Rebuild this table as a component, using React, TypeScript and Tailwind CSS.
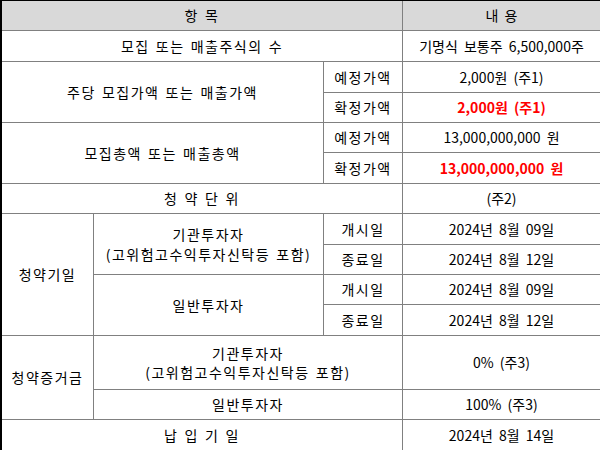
import React from "react";

const C = ({
  children,
  className = "",
  last = false,
}: {
  children?: React.ReactNode;
  className?: string;
  last?: boolean;
}) => (
  <div
    className={
      "flex items-center justify-center text-center border-b border-[#808080] " +
      (last ? "[word-spacing:3px] " : "border-r tracking-[1.5px] [word-spacing:1.5px] ") +
      className
    }
  >
    {children}
  </div>
);

export default function App() {
  return (
    <div
      className="w-[600px] h-[450px] overflow-hidden bg-white border-l-2 border-t border-black text-[14px] text-black"
      style={{ fontFamily: '"Noto Sans CJK KR", "Noto Sans", sans-serif' }}
    >
      <div className="grid grid-cols-[92px_230px_79px_197px] grid-rows-[30px_31px_31px_30px_30px_31px_30px_31px_30px_30px_31px_54px_30px_31px]">
        <C className="col-span-3 bg-[#d9d9d9]">항 목</C>
        <C last className="bg-[#d9d9d9]">내 용</C>

        <C className="col-span-3">모집 또는 매출주식의 수</C>
        <C last>기명식 보통주 6,500,000주</C>

        <C className="col-span-2 row-span-2">주당 모집가액 또는 매출가액</C>
        <C>예정가액</C>
        <C last>2,000원 (주1)</C>
        <C>확정가액</C>
        <C last className="font-bold text-[#ff0000]">2,000원 (주1)</C>

        <C className="col-span-2 row-span-2">모집총액 또는 매출총액</C>
        <C>예정가액</C>
        <C last>13,000,000,000 원</C>
        <C>확정가액</C>
        <C last className="font-bold text-[#ff0000]">13,000,000,000 원</C>

        <C className="col-span-3">청 약 단 위</C>
        <C last>(주2)</C>

        <C className="row-span-4">청약기일</C>
        <C className="row-span-2 flex-col leading-[20px]">
          <span>기관투자자</span>
          <span>(고위험고수익투자신탁등 포함)</span>
        </C>
        <C>개시일</C>
        <C last>2024년 8월 09일</C>
        <C>종료일</C>
        <C last>2024년 8월 12일</C>
        <C className="row-span-2">일반투자자</C>
        <C>개시일</C>
        <C last>2024년 8월 09일</C>
        <C>종료일</C>
        <C last>2024년 8월 12일</C>

        <C className="row-span-2">청약증거금</C>
        <C className="col-span-2 flex-col leading-[19px]">
          <span>기관투자자</span>
          <span>(고위험고수익투자신탁등 포함)</span>
        </C>
        <C last>0% (주3)</C>
        <C className="col-span-2">일반투자자</C>
        <C last>100% (주3)</C>

        <C className="col-span-3">납 입 기 일</C>
        <C last>2024년 8월 14일</C>
      </div>
    </div>
  );
}
